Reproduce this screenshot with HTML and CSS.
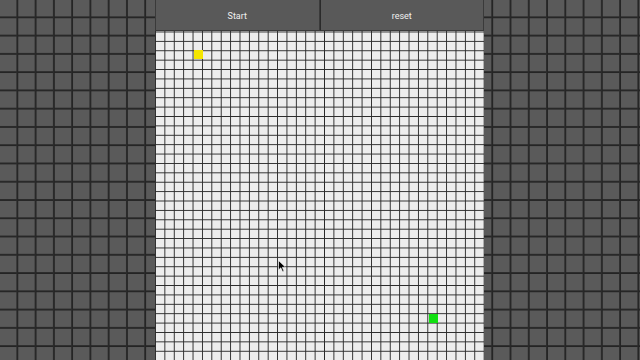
FILE: index.html
```html
<!DOCTYPE html>
<html>
<head>
<meta charset="utf-8">
<link rel="stylesheet" href="styles.css">
</head>
<body>
<div class="app">
  <div class="toolbar">
    <button class="btn">Start</button>
    <button class="btn">reset</button>
  </div>
  <div class="board">
    <div class="cell start"></div>
    <div class="cell goal"></div>
    <svg class="cursor" width="9" height="13" viewBox="0 0 9 13"><path d="M0.5 0.5 L0.5 10 L2.8 7.8 L4.6 11.8 L6 11.2 L4.3 7.3 L7.6 7.3 Z" fill="#000" stroke="#fff" stroke-width="0.6"/></svg>
  </div>
</div>
</body>
</html>
```

FILE: styles.css
```css
html, body {
  margin: 0;
  padding: 0;
  height: 100%;
  overflow: hidden;
}
body {
  background-color: #5a5a5a;
  background-image:
    linear-gradient(to right, transparent 16.4px, #3c3c3c 16.4px, #242424 17px, #242424 18px, #3c3c3c 18.28px),
    linear-gradient(to bottom, transparent 16.4px, #3c3c3c 16.4px, #242424 17px, #242424 18px, #3c3c3c 18.28px);
  background-size: 18.28px 18.28px;
  font-family: "Roboto", "Liberation Sans", sans-serif;
}
.app {
  width: 329px;
  margin: 0 0 0 155px;
  display: flex;
  flex-direction: column;
}
.toolbar {
  display: flex;
  height: 31px;
}
.btn {
  flex: 1;
  margin: 0;
  background: #595959;
  border: 1px solid #3a3a3a;
  border-top: none;
  color: #f0f0f0;
  font-family: "Roboto", "Liberation Sans", sans-serif;
  font-size: 9px;
  padding: 2px 0 0 0;
}
.btn + .btn {
  border-left: 1px solid #2a2a2a;
}
.board {
  position: relative;
  height: 329px;
  background-color: #ededed;
  background-image:
    linear-gradient(to right, #2a2a2a 1px, transparent 1px),
    linear-gradient(to bottom, #2a2a2a 1px, transparent 1px);
  background-size: 9.4px 9.4px;
  background-position: 0 0.5px;
}
.cell {
  position: absolute;
  width: 9px;
  height: 9px;
}
.start {
  left: 38.6px;
  top: 19.3px;
  background: #f5e600;
}
.goal {
  left: 273.6px;
  top: 282.5px;
  background: #10e010;
}
.cursor {
  position: absolute;
  left: 123px;
  top: 229px;
}
```
